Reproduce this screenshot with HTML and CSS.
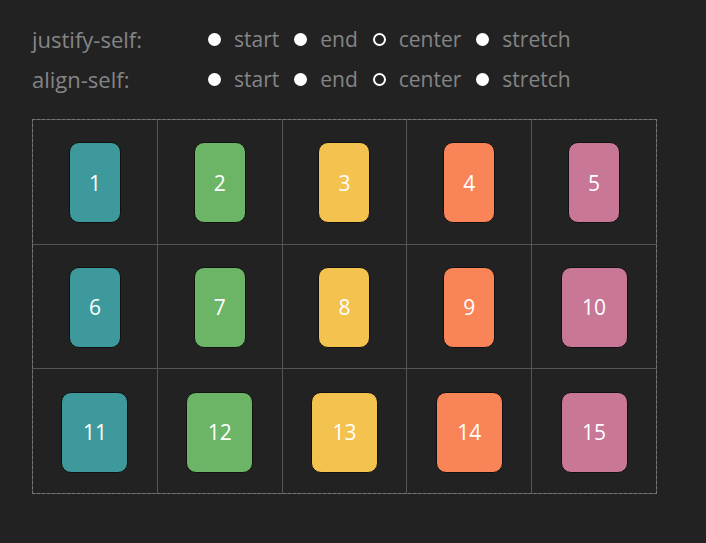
FILE: index.html
```html
<!DOCTYPE html>
<html>
<head>
<meta charset="utf-8">
<link rel="stylesheet" href="styles.css">
</head>
<body>
<div class="controls">
  <div class="row">
    <span class="label">justify-self:</span>
    <span class="opt"><span class="radio"></span>start</span>
    <span class="opt"><span class="radio"></span>end</span>
    <span class="opt"><span class="radio on"></span>center</span>
    <span class="opt"><span class="radio"></span>stretch</span>
  </div>
  <div class="row">
    <span class="label">align-self:</span>
    <span class="opt"><span class="radio"></span>start</span>
    <span class="opt"><span class="radio"></span>end</span>
    <span class="opt"><span class="radio on"></span>center</span>
    <span class="opt"><span class="radio"></span>stretch</span>
  </div>
</div>
<div class="grid">
  <div class="cell"><div class="box c1">1</div></div>
  <div class="cell"><div class="box c2">2</div></div>
  <div class="cell"><div class="box c3">3</div></div>
  <div class="cell"><div class="box c4">4</div></div>
  <div class="cell"><div class="box c5">5</div></div>
  <div class="cell"><div class="box c1">6</div></div>
  <div class="cell"><div class="box c2">7</div></div>
  <div class="cell"><div class="box c3">8</div></div>
  <div class="cell"><div class="box c4">9</div></div>
  <div class="cell"><div class="box c5 wide">10</div></div>
  <div class="cell"><div class="box c1 wide">11</div></div>
  <div class="cell"><div class="box c2 wide">12</div></div>
  <div class="cell"><div class="box c3 wide">13</div></div>
  <div class="cell"><div class="box c4 wide">14</div></div>
  <div class="cell"><div class="box c5 wide">15</div></div>
</div>
</body>
</html>
```
FILE: styles.css
```css
html, body {
  margin: 0;
  background: #222222;
}
body {
  padding: 19px 32px 0 32px;
  font-family: "Open Sans", "Noto Sans", sans-serif;
  font-size: 22px;
  color: #858585;
}
.controls {
  display: flex;
  flex-direction: column;
}
.row {
  height: 40px;
  display: flex;
  align-items: center;
}
.label {
  width: 176px;
}
.opt {
  display: flex;
  align-items: center;
  margin-right: 15px;
  font-size: 21px;
}
.radio {
  width: 13px;
  height: 13px;
  border-radius: 50%;
  background: #ffffff;
  margin-right: 13px;
  box-sizing: border-box;
}
.radio.on {
  background: #222222;
  border: 2px solid #ffffff;
}
.grid {
  margin-top: 20px;
  width: 623px;
  height: 373px;
  border: 1px dashed #777777;
  display: grid;
  grid-template-columns: repeat(5, 1fr);
  grid-template-rows: repeat(3, 1fr);
  gap: 1px;
  background: #555555;
}
.cell {
  background: #222222;
  display: flex;
  align-items: center;
  justify-content: center;
}
.box {
  width: 52px;
  height: 81px;
  box-sizing: border-box;
  border: 1px solid #111111;
  border-radius: 10px;
  display: flex;
  align-items: center;
  justify-content: center;
  color: #ffffff;
  font-size: 21px;
  margin-top: 2px;
}
.box.wide { width: 67px; }
.c1 { background: #3d999b; }
.c2 { background: #6cb466; }
.c3 { background: #f4c24f; }
.c4 { background: #f98457; }
.c5 { background: #c87796; }
```
